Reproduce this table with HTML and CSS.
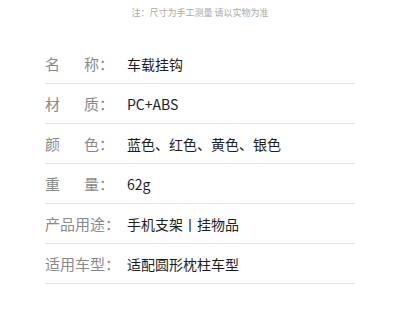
FILE: index.html
```html
<!DOCTYPE html>
<html lang="zh">
<head>
<meta charset="utf-8">
<link rel="stylesheet" href="styles.css">
</head>
<body>
<div class="page">
  <p class="note">注：尺寸为手工测量 请以实物为准</p>
  <div class="specs">
    <div class="row"><span class="label"><span class="sp">名</span>称：</span><span class="value">车载挂钩</span></div>
    <div class="row"><span class="label"><span class="sp">材</span>质：</span><span class="value">PC+ABS</span></div>
    <div class="row"><span class="label"><span class="sp">颜</span>色：</span><span class="value">蓝色、红色、黄色、银色</span></div>
    <div class="row"><span class="label"><span class="sp">重</span>量：</span><span class="value">62g</span></div>
    <div class="row"><span class="label">产品用途：</span><span class="value">手机支架丨挂物品</span></div>
    <div class="row"><span class="label">适用车型：</span><span class="value">适配圆形枕柱车型</span></div>
  </div>
</div>
</body>
</html>
```

FILE: styles.css
```css
html, body {
  margin: 0;
  padding: 0;
  background: #fff;
}
.page {
  width: 400px;
  height: 312px;
  font-family: "Noto Sans CJK SC", "Noto Sans", sans-serif;
}
.note {
  margin: 0;
  padding-top: 6px;
  height: 44px;
  font-size: 9px;
  line-height: 14px;
  color: #aaa;
  text-align: center;
  box-sizing: border-box;
}
.specs {
  margin: 0 45px;
}
.row {
  display: flex;
  align-items: center;
  height: 39px;
  border-bottom: 1px solid #e4e4e4;
  white-space: nowrap;
}
.label {
  width: 82px;
  font-size: 15px;
  color: #8a8a8a;
  flex: none;
}
.sp {
  margin-right: 24px;
}
.value {
  font-size: 14px;
  color: #1e1e1e;
  font-weight: 400;
}
```
